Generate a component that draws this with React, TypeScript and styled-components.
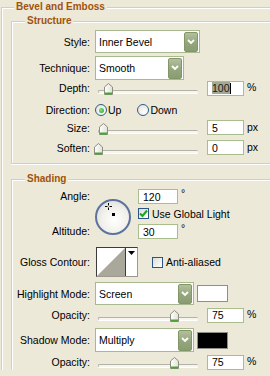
import React from 'react';
import styled, { createGlobalStyle } from 'styled-components';

const Global = createGlobalStyle`
  html, body { margin: 0; padding: 0; background: #ece9d8; }
  body {
    width: 270px; height: 376px; overflow: hidden;
    font-family: "Liberation Sans", Arial, sans-serif;
    font-size: 10.5px; color: #000;
  }
`;

const Group = styled.fieldset<{ $ml: number; $mt: number; $bottom?: boolean }>`
  margin: ${p => p.$mt}px 0 0 ${p => p.$ml}px;
  padding: 0;
  min-width: 0;
  border: 1px solid #d0d0bf;
  border-right: none;
  border-bottom: ${p => (p.$bottom ? '1px solid #d0d0bf' : 'none')};
  padding-bottom: ${p => (p.$bottom ? 8 : 0)}px;
  box-shadow: inset 1px 1px 0 #fff${p => (p.$bottom ? ', 0 1px 0 #fff' : '')};
`;

const Legend = styled.legend<{ $ml: number }>`
  margin-left: ${p => p.$ml}px;
  padding: 0 2px;
  height: 14px;
  line-height: 14px;
  font-size: 10px;
  font-weight: bold;
  color: #a0520e;
  background: #ece9d8;
`;

const Row = styled.div<{ $h: number; $mt?: number }>`
  display: flex;
  align-items: center;
  height: ${p => p.$h}px;
  margin-top: ${p => p.$mt ?? 0}px;
`;

const Label = styled.div`
  width: 78px;
  flex: none;
  text-align: right;
  white-space: nowrap;
  margin-right: 5px;
`;

const SelectBox = styled.div<{ $w: number; $h: number }>`
  width: ${p => p.$w}px;
  height: ${p => p.$h}px;
  box-sizing: border-box;
  border: 1px solid #a9b98f;
  background: #fff;
  display: flex;
  align-items: center;
  padding-left: 3px;
  flex: none;
`;

const SelectText = styled.span`
  flex: 1;
  white-space: nowrap;
  overflow: hidden;
`;

const DropBtn = styled.div<{ $h: number }>`
  width: 14px;
  height: ${p => p.$h}px;
  margin-right: 1px;
  box-sizing: border-box;
  border: 1px solid #839668;
  border-radius: 2px;
  background: linear-gradient(#b2c09c, #94a67c 55%, #8a9c72);
  display: flex;
  align-items: center;
  justify-content: center;
`;

const Chevron = () => (
  <svg width="8" height="6" viewBox="0 0 8 6">
    <polyline points="1,1 4,4 7,1" fill="none" stroke="#fff" strokeWidth="1.8" />
  </svg>
);

const Select: React.FC<{ w: number; h: number; value: string }> = ({ w, h, value }) => (
  <SelectBox $w={w} $h={h}>
    <SelectText>{value}</SelectText>
    <DropBtn $h={h - 3}>
      <Chevron />
    </DropBtn>
  </SelectBox>
);

const SliderWrap = styled.div`
  position: relative;
  width: 108px;
  height: 14px;
  flex: none;
`;

const Track = styled.div`
  position: absolute;
  left: 3px;
  right: 5px;
  bottom: 2px;
  height: 3px;
  box-sizing: border-box;
  border-radius: 2px;
  border-top: 1px solid #b3b2a6;
  border-left: 1px solid #b3b2a6;
  background: #f6f5ef;
  box-shadow: 0 1px 0 #fff;
`;

const Thumb = styled.svg`
  position: absolute;
  bottom: 0;
`;

const Slider: React.FC<{ pos: number }> = ({ pos }) => (
  <SliderWrap>
    <Track />
    <Thumb width="9" height="12" viewBox="0 0 9 12" style={{ left: pos - 95 - 4 }}>
      <defs>
        <linearGradient id="tg" x1="0" y1="0" x2="1" y2="0">
          <stop offset="0" stopColor="#ffffff" />
          <stop offset="1" stopColor="#e2e1d8" />
        </linearGradient>
      </defs>
      <path d="M0.5,4 L4.5,0.5 L8.5,4 L8.5,11.5 L0.5,11.5 Z" fill="url(#tg)" stroke="#8e8d82" />
      <rect x="1" y="9.5" width="7" height="2" fill="#45a72e" />
    </Thumb>
  </SliderWrap>
);

const InputBox = styled.div<{ $w: number; $ml: number }>`
  width: ${p => p.$w}px;
  height: 15px;
  box-sizing: border-box;
  margin-left: ${p => p.$ml}px;
  border: 1px solid #a9bd8f;
  background: #fff;
  padding-left: 4px;
  display: flex;
  align-items: center;
  flex: none;
`;

const Selected = styled.span`
  background: #a3a991;
  color: #1a1a1a;
`;

const Caret = styled.span`
  width: 1px;
  height: 11px;
  background: #000;
`;

const Unit = styled.span`
  margin-left: 3px;
  align-self: flex-start;
  margin-top: 1px;
`;

const RadioCircle = styled.span<{ $on?: boolean }>`
  width: 12px;
  height: 12px;
  box-sizing: border-box;
  border-radius: 50%;
  border: 1px solid #2f5b8e;
  background: radial-gradient(circle at 65% 70%, #fff 0%, #e6e4da 80%);
  display: inline-flex;
  align-items: center;
  justify-content: center;
  flex: none;
  &::after {
    content: '';
    display: ${p => (p.$on ? 'block' : 'none')};
    width: 5px;
    height: 5px;
    border-radius: 50%;
    background: radial-gradient(circle at 40% 40%, #7fe37f, #21a121);
  }
`;

const Option = styled.div<{ $ml: number }>`
  display: flex;
  align-items: center;
  margin-left: ${p => p.$ml}px;
  gap: 1px;
`;

const CheckBox = styled.span`
  width: 11px;
  height: 11px;
  box-sizing: border-box;
  border: 1px solid #2c5486;
  background: linear-gradient(135deg, #dcdcd6, #fff);
  display: inline-flex;
  align-items: center;
  justify-content: center;
  flex: none;
`;

const CheckRow = styled.div<{ $ml: number }>`
  display: flex;
  align-items: center;
  gap: 3px;
  margin-left: ${p => p.$ml}px;
  height: 15px;
`;

const AngleBlock = styled.div`
  display: flex;
  margin-top: 3px;
`;

const LabelCol = styled.div`
  width: 78px;
  height: 50px;
  margin-right: 5px;
  display: flex;
  flex-direction: column;
  justify-content: space-between;
  text-align: right;
  flex: none;
`;

const LabelLine = styled.div`
  height: 15px;
  line-height: 14px;
`;

const Dial = styled.div`
  position: relative;
  width: 36px;
  height: 36px;
  margin-top: 10px;
  box-sizing: border-box;
  border-radius: 50%;
  border: 2px solid #5c72a0;
  background: radial-gradient(circle at 55% 60%, #ffffff 0%, #f1f0ea 50%, #d6d4ca 100%);
  flex: none;
`;

const DialDot = styled.span`
  position: absolute;
  left: 15px;
  top: 12px;
  width: 3px;
  height: 3px;
  background: #000;
`;

const Cross = styled.svg`
  position: absolute;
  left: 8px;
  top: 2px;
`;

const RightCol = styled.div`
  display: flex;
  flex-direction: column;
  margin-left: 7px;
  gap: 2px;
`;

const InputLine = styled.div<{ $mt?: number }>`
  display: flex;
  align-items: flex-start;
  height: 15px;
  margin-top: ${p => p.$mt ?? 0}px;
`;

const Degree = styled.span`
  margin-left: 3px;
  line-height: 9px;
`;

const Contour = styled.div`
  width: 42px;
  height: 30px;
  margin-left: 1px;
  box-sizing: border-box;
  border: 1px solid #3c3c3c;
  border-right-color: #9c9a8e;
  border-bottom-color: #9c9a8e;
  background: #fff;
  display: flex;
  flex: none;
`;

const ContourArrow = styled.div`
  flex: 1;
  border-left: 1px solid #3c3c3c;
  display: flex;
  justify-content: center;
  padding-top: 3px;
`;

const Swatch = styled.div<{ $c: string }>`
  width: 31px;
  height: 17px;
  box-sizing: border-box;
  margin-left: 3px;
  border: 1px solid #8f8f8a;
  background: ${p => p.$c};
  flex: none;
`;

const Check = () => (
  <svg width="9" height="9" viewBox="0 0 9 9">
    <path d="M1,4.5 L3.5,7 L8,1.5" fill="none" stroke="#1fa31f" strokeWidth="2" />
  </svg>
);

export default function App() {
  return (
    <>
      <Global />
      <Group $ml={1} $mt={0}>
        <Legend $ml={12}>Bevel and Emboss</Legend>
        <Group $ml={9} $mt={0} $bottom>
          <Legend $ml={13}>Structure</Legend>
          <Row $h={23} $mt={2}>
            <Label>Style:</Label>
            <Select w={105} h={23} value="Inner Bevel" />
          </Row>
          <Row $h={24} $mt={3}>
            <Label>Technique:</Label>
            <Select w={89} h={24} value="Smooth" />
          </Row>
          <Row $h={16}>
            <Label>Depth:</Label>
            <Slider pos={108} />
            <InputBox $w={37} $ml={4}>
              <Selected>100</Selected>
              <Caret />
            </InputBox>
            <Unit>%</Unit>
          </Row>
          <Row $h={20} $mt={4}>
            <Label>Direction:</Label>
            <Option $ml={0}>
              <RadioCircle $on />
              <span>Up</span>
            </Option>
            <Option $ml={16}>
              <RadioCircle />
              <span>Down</span>
            </Option>
          </Row>
          <Row $h={15}>
            <Label>Size:</Label>
            <Slider pos={103} />
            <InputBox $w={37} $ml={4}>5</InputBox>
            <Unit>px</Unit>
          </Row>
          <Row $h={15} $mt={5}>
            <Label>Soften:</Label>
            <Slider pos={98} />
            <InputBox $w={37} $ml={4}>0</InputBox>
            <Unit>px</Unit>
          </Row>
        </Group>
        <Group $ml={9} $mt={8}>
          <Legend $ml={13}>Shading</Legend>
          <AngleBlock>
            <LabelCol>
              <LabelLine>Angle:</LabelLine>
              <LabelLine>Altitude:</LabelLine>
            </LabelCol>
            <Dial>
              <Cross width="7" height="7" viewBox="0 0 7 7">
                <path d="M3.5,0 V2.5 M3.5,4.5 V7 M0,3.5 H2.5 M4.5,3.5 H7" stroke="#000" strokeWidth="1" />
              </Cross>
              <DialDot />
            </Dial>
            <RightCol>
              <InputLine>
                <InputBox $w={40} $ml={0}>120</InputBox>
                <Degree>°</Degree>
              </InputLine>
              <CheckRow $ml={0}>
                <CheckBox>
                  <Check />
                </CheckBox>
                <span>Use Global Light</span>
              </CheckRow>
              <InputLine $mt={1}>
                <InputBox $w={40} $ml={0}>30</InputBox>
                <Degree>°</Degree>
              </InputLine>
            </RightCol>
          </AngleBlock>
          <Row $h={30} $mt={8}>
            <Label>Gloss Contour:</Label>
            <Contour>
              <svg width="28" height="28" viewBox="0 0 28 28">
                <polygon points="0,28 28,0 28,28" fill="#a9a89a" />
              </svg>
              <ContourArrow>
                <svg width="7" height="4" viewBox="0 0 7 4">
                  <polygon points="0,0 7,0 3.5,4" fill="#000" />
                </svg>
              </ContourArrow>
            </Contour>
            <CheckRow $ml={14}>
              <CheckBox />
              <span>Anti-aliased</span>
            </CheckRow>
          </Row>
          <Row $h={23} $mt={5}>
            <Label>Highlight Mode:</Label>
            <Select w={99} h={23} value="Screen" />
            <Swatch $c="#ffffff" />
          </Row>
          <Row $h={16} $mt={2}>
            <Label>Opacity:</Label>
            <Slider pos={174} />
            <InputBox $w={37} $ml={4}>75</InputBox>
            <Unit>%</Unit>
          </Row>
          <Row $h={24} $mt={5}>
            <Label>Shadow Mode:</Label>
            <Select w={99} h={24} value="Multiply" />
            <Swatch $c="#000000" />
          </Row>
          <Row $h={16} $mt={2}>
            <Label>Opacity:</Label>
            <Slider pos={174} />
            <InputBox $w={37} $ml={4}>75</InputBox>
            <Unit>%</Unit>
          </Row>
        </Group>
      </Group>
    </>
  );
}
